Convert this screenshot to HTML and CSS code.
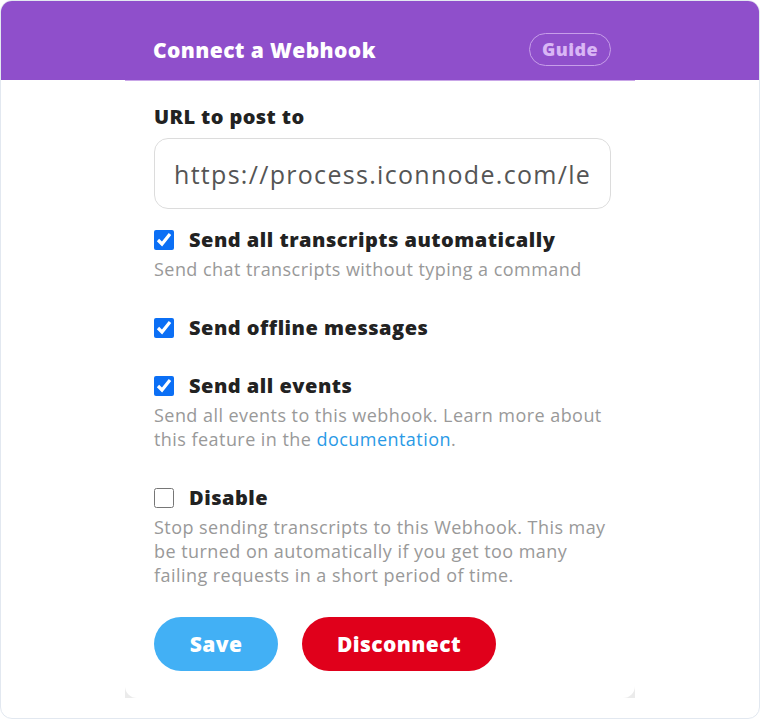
FILE: index.html
```html
<!DOCTYPE html>
<html lang="en">
<head>
  <meta charset="UTF-8">
  <meta name="viewport" content="width=device-width, initial-scale=1">
  <title>Connect a Webhook</title>
  <link rel="stylesheet" href="styles.css">
</head>
<body>
  <div class="card">
    <div class="header">
      <div class="header-inner">
        <h1>Connect a Webhook</h1>
        <a class="guide" href="#">Guide</a>
      </div>
    </div>
    <div class="panel-wrap">
      <form class="panel">
        <label class="field-label" for="url">URL to post to</label>
        <input class="url" type="text" id="url" value="https://process.iconnode.com/leads/webhook">

        <div class="option">
          <label class="check"><input type="checkbox" checked> Send all transcripts automatically</label>
          <p class="desc">Send chat transcripts without typing a command</p>
        </div>

        <div class="option">
          <label class="check"><input type="checkbox" checked> Send offline messages</label>
        </div>

        <div class="option">
          <label class="check"><input type="checkbox" checked> Send all events</label>
          <p class="desc">Send all events to this webhook. Learn more about this feature in the <a href="#">documentation</a>.</p>
        </div>

        <div class="option last">
          <label class="check"><input type="checkbox"> Disable</label>
          <p class="desc">Stop sending transcripts to this Webhook. This may be turned on automatically if you get too many failing requests in a short period of time.</p>
        </div>

        <div class="actions">
          <button type="submit" class="btn save">Save</button>
          <button type="button" class="btn disconnect">Disconnect</button>
        </div>
      </form>
    </div>
  </div>
</body>
</html>
```

FILE: styles.css
```css
/* Webhook settings card */
body { margin: 0; font-family: "Open Sans", sans-serif; background: #fff; }
.card { width: 758px; height: 717px; border: 1px solid #e2e8f0; border-radius: 12px; overflow: hidden; background: #fff; }
.header { background: #8f4fcb; height: 79px; }
.header-inner { width: 458px; margin-left: 152px; padding-top: 32px; display: flex; justify-content: space-between; align-items: center; }
h1 { margin: 0; color: #fff; font-size: 21px; line-height: 28px; font-weight: 800; letter-spacing: 0.4px; }
.guide { color: #d9b6f5; border: 1.5px solid #c79ee9; border-radius: 17px; padding: 2px 12px 3px; font-size: 18px; line-height: 26px; font-weight: 800; letter-spacing: 0.4px; text-decoration: none; }
.panel-wrap { width: 510px; margin: 0 auto; background: #ebebeb; border-top: 1px solid #c9a6e8; }
.panel { background: #fff; border-radius: 0 0 12px 12px; padding: 23px 24px 27px 29px; display: flex; flex-direction: column; }
.field-label { font-size: 20px; line-height: 26px; font-weight: 800; color: #222; letter-spacing: 0.4px; }
.url { margin: 8px 0 20px; height: 71px; box-sizing: border-box; border: 1px solid #dcdcdc; border-radius: 14px; padding: 0 19px; font-family: "Open Sans", sans-serif; font-size: 25px; letter-spacing: 1.3px; color: #555; width: 457px; }
.option { margin-bottom: 36px; }
.option.last { margin-bottom: 30px; }
.check { display: flex; align-items: center; gap: 15px; font-size: 20px; line-height: 22px; font-weight: 800; color: #222; letter-spacing: 0.5px; }
.check input { margin: 0; width: 20px; height: 20px; accent-color: #0b6ff5; }
.desc { margin: 6px 0 0; font-size: 18px; line-height: 24px; color: #999; letter-spacing: 0.45px; }
.desc a { color: #2a9ae6; text-decoration: none; }
.actions { display: flex; gap: 24px; }
.btn { height: 54px; border: none; border-radius: 27px; color: #fff; font-family: "Open Sans", sans-serif; font-size: 21px; font-weight: 800; letter-spacing: 0.4px; cursor: pointer; }
.save { width: 124px; background: #42b0f5; }
.disconnect { width: 194px; background: #e0001b; }
```
